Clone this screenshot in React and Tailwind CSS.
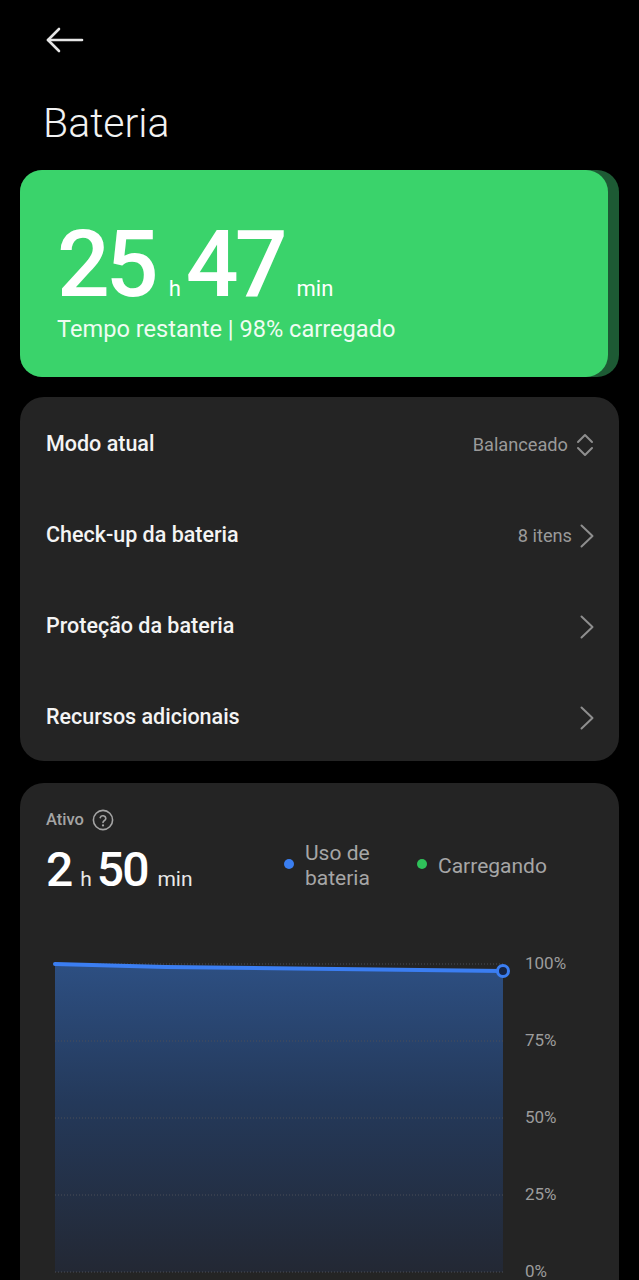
const font = { fontFamily: "Roboto, 'Noto Sans', sans-serif" };

const BackArrow = () => (
  <svg width="38" height="28" viewBox="0 0 38 28" fill="none" stroke="#e6e6e6" strokeWidth="2.6" strokeLinecap="round" strokeLinejoin="round">
    <path d="M2 14h34" />
    <path d="M13 3L2 14l11 11" />
  </svg>
);

const ChevronRight = () => (
  <svg width="14" height="24" viewBox="0 0 14 24" fill="none" stroke="#8e8e8e" strokeWidth="2" strokeLinecap="round" strokeLinejoin="round">
    <path d="M1.5 1.5L12.5 12 1.5 22.5" />
  </svg>
);

const ChevronUpDown = () => (
  <svg width="18" height="28" viewBox="0 0 18 28" fill="none" stroke="#8e8e8e" strokeWidth="2" strokeLinecap="round" strokeLinejoin="round">
    <path d="M2 11L9 4l7 7" />
    <path d="M2 17l7 7 7-7" />
  </svg>
);

const HelpIcon = () => (
  <svg width="22" height="22" viewBox="0 0 22 22" fill="none" stroke="#a4a4a4" strokeWidth="1.6" strokeLinecap="round" strokeLinejoin="round">
    <circle cx="11" cy="11" r="9.6" />
    <path d="M8.2 8.6a2.9 2.9 0 0 1 5.6 0.9c0 1.9-2.8 2.4-2.8 4" />
    <path d="M11 16.4h.01" strokeWidth="2.2" />
  </svg>
);

const rows = [
  { label: "Modo atual", value: "Balanceado", icon: <ChevronUpDown /> },
  { label: "Check-up da bateria", value: "8 itens", icon: <ChevronRight /> },
  { label: "Proteção da bateria", value: "", icon: <ChevronRight /> },
  { label: "Recursos adicionais", value: "", icon: <ChevronRight /> },
];

const grid = [10, 87, 164, 241, 318];
const labels = ["100%", "75%", "50%", "25%", "0%"];

const Chart = () => (
  <div className="flex mt-[57px]">
    <svg width="466" height="328" viewBox="0 0 466 328" className="shrink-0">
      <defs>
        <linearGradient id="fill" x1="0" y1="0" x2="0" y2="1">
          <stop offset="0" stopColor="#2d4f82" />
          <stop offset="0.45" stopColor="#24395a" />
          <stop offset="1" stopColor="#232834" />
        </linearGradient>
      </defs>
      <path d="M9 10 L120 13 L457 17 L457 318 L9 318 Z" fill="url(#fill)" />
      {grid.map((y) => (
        <line key={y} x1="9" x2="459" y1={y} y2={y} stroke="#4a4f58" strokeWidth="1" strokeDasharray="1 2" />
      ))}
      <path d="M9 10 L120 13 L457 17" fill="none" stroke="#3b7ef2" strokeWidth="4" strokeLinecap="round" />
      <circle cx="457" cy="17" r="5.5" fill="#142446" stroke="#3b7ef2" strokeWidth="3" />
    </svg>
    <div className="flex flex-col justify-between h-[328px] ml-[13px] -mt-[1px] text-[17px] leading-[20px] text-[#9c9c9c]">
      {labels.map((l) => (
        <span key={l}>{l}</span>
      ))}
    </div>
  </div>
);

export default function App() {
  return (
    <div className="min-h-screen bg-black text-white overflow-hidden" style={font}>
      {/* Header */}
      <div className="pt-[26px] pl-[46px]">
        <BackArrow />
      </div>
      <h1 className="mt-[49px] pl-[43px] text-[41px] leading-[41px] font-light text-[#f2f2f2]">Bateria</h1>

      <div className="px-5">
        {/* Remaining time card */}
        <div className="mt-[26px] h-[207px] rounded-[22px] bg-[#1d5a34] flex">
          <div className="flex-1 mr-[11px] rounded-[22px] bg-[#3ad36b] pt-[48px] pl-[37px]">
            <div className="flex items-baseline leading-none">
              <span className="text-[93px] font-medium tracking-[-4px]">25</span>
              <span className="text-[22px] ml-[14px]">h</span>
              <span className="text-[93px] font-medium tracking-[-4px] ml-[5px]">47</span>
              <span className="text-[22px] ml-[13px]">min</span>
            </div>
            <div className="mt-[4px] text-[23.6px] leading-[28px] text-[#effcf2]">Tempo restante | 98% carregado</div>
          </div>
        </div>

        {/* Settings list */}
        <div className="mt-[20px] rounded-[24px] bg-[#242424] pl-[26px] pr-[25px]">
          {rows.map((r) => (
            <div key={r.label} className="h-[91px] pt-[4px] flex items-center">
              <span className="flex-1 text-[21.5px] font-medium text-[#f4f4f4]">{r.label}</span>
              {r.value && <span className="text-[18.2px] text-[#9a9a9a] mr-[8px]">{r.value}</span>}
              {r.icon}
            </div>
          ))}
        </div>

        {/* Active usage card */}
        <div className="mt-[22px] rounded-t-[24px] bg-[#242424] pt-[26px] pl-[26px] pb-[40px]">
          <div className="flex items-center h-[22px]">
            <span className="text-[16.5px] font-medium text-[#a4a4a4]">Ativo</span>
            <span className="ml-[8px] flex"><HelpIcon /></span>
          </div>
          <div className="flex mt-[10px] h-[56px]">
            <div className="w-[238px] pt-[5px] flex items-baseline leading-none">
              <span className="text-[48px] font-medium tracking-[-1px]">2</span>
              <span className="text-[21px] ml-[8px] text-[#e8e8e8]">h</span>
              <span className="text-[48px] font-medium tracking-[-2px] ml-[5px]">50</span>
              <span className="text-[21px] ml-[10px] text-[#e8e8e8]">min</span>
            </div>
            <div className="flex">
              <span className="mt-[18px] w-[10px] h-[10px] rounded-full bg-[#3a7ef0]" />
              <span className="ml-[11px] w-[72px] text-[21px] leading-[25px] text-[#a6a6a6]">Uso de bateria</span>
            </div>
            <div className="flex ml-[40px]">
              <span className="mt-[18px] w-[10px] h-[10px] rounded-full bg-[#2fc25a]" />
              <span className="ml-[11px] mt-[13px] text-[21px] leading-[25px] text-[#a6a6a6]">Carregando</span>
            </div>
          </div>
          <Chart />
        </div>
      </div>
    </div>
  );
}
